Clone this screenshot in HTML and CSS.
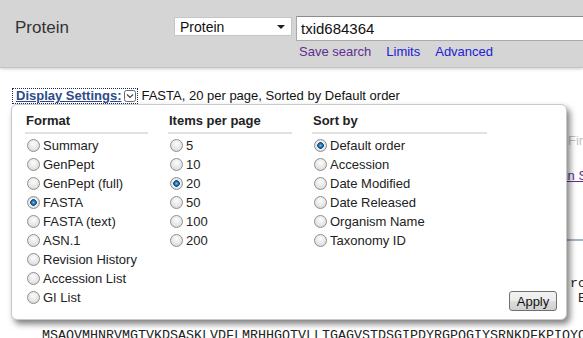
FILE: index.html
```html
<!DOCTYPE html>
<html lang="en">
<head>
    <meta charset="UTF-8">
    <title>Protein - txid684364</title>
    <link rel="stylesheet" href="styles.css">
</head>
<body>

<header class="masthead">
    <div class="db-title">Protein</div>
    <div class="search">
        <div class="search-row">
            <div class="db-select"><span>Protein</span><span class="arrow"></span></div>
            <div class="term-input">txid684364</div>
        </div>
        <div class="search-links">
            <a href="#" class="visited">Save search</a>
            <a href="#">Limits</a>
            <a href="#">Advanced</a>
        </div>
    </div>
</header>

<div class="display-bar">
    <span class="ds-toggle">
        <a href="#" class="ds-link">Display Settings:</a>
        <svg class="ds-icon" width="12" height="12" viewBox="0 0 12 12">
            <rect x="0.5" y="0.5" width="11" height="11" rx="2" fill="#fff" stroke="#6b6b6b"/>
            <path d="M3 4.5 L6 7.5 L9 4.5" fill="none" stroke="#444" stroke-width="1.2"/>
        </svg>
    </span>
    <span class="ds-summary">FASTA, 20 per page, Sorted by Default order</span>
</div>

<div class="side-links">
    <div class="pager">First</div>
    <a href="#" class="visited">Run Sequence</a>
</div>

<div class="rule"></div>

<pre class="fasta">&gt;gi|498475123|ref|WP_010531234.1| NAD-dependent deacetylase [Thio rcobacter sp.]
                                                                   E
<span class="seq">MSAQVMHNRVMGTVKDSASKLVDFLMRHHGQTVLLTGAGVSTDSGIPDYRGPQGIYSRNKDFKPIQYQ</span></pre>

<!-- display settings menu, opened over the results -->
<div class="settings-popup">
    <div class="col col-format">
        <div class="col-head">Format</div>
        <label class="opt"><span class="radio"></span>Summary</label>
        <label class="opt"><span class="radio"></span>GenPept</label>
        <label class="opt"><span class="radio"></span>GenPept (full)</label>
        <label class="opt"><span class="radio on"></span>FASTA</label>
        <label class="opt"><span class="radio"></span>FASTA (text)</label>
        <label class="opt"><span class="radio"></span>ASN.1</label>
        <label class="opt"><span class="radio"></span>Revision History</label>
        <label class="opt"><span class="radio"></span>Accession List</label>
        <label class="opt"><span class="radio"></span>GI List</label>
    </div>
    <div class="col col-items">
        <div class="col-head">Items per page</div>
        <label class="opt"><span class="radio"></span>5</label>
        <label class="opt"><span class="radio"></span>10</label>
        <label class="opt"><span class="radio on"></span>20</label>
        <label class="opt"><span class="radio"></span>50</label>
        <label class="opt"><span class="radio"></span>100</label>
        <label class="opt"><span class="radio"></span>200</label>
    </div>
    <div class="col col-sort">
        <div class="col-head">Sort by</div>
        <label class="opt"><span class="radio on"></span>Default order</label>
        <label class="opt"><span class="radio"></span>Accession</label>
        <label class="opt"><span class="radio"></span>Date Modified</label>
        <label class="opt"><span class="radio"></span>Date Released</label>
        <label class="opt"><span class="radio"></span>Organism Name</label>
        <label class="opt"><span class="radio"></span>Taxonomy ID</label>
    </div>
    <button class="apply-btn">Apply</button>
</div>

</body>
</html>
```

FILE: styles.css
```css
html, body {
    margin: 0;
    padding: 0;
    overflow: hidden;
}

body {
    font-family: "Liberation Sans", Arial, sans-serif;
    font-size: 13px;
    color: #222;
    background: #fff;
}

a {
    color: #2020d8;
    text-decoration: none;
}

a.visited {
    color: #5c2f92;
}

/* top search bar */
.masthead {
    display: flex;
    height: 68px;
    box-sizing: border-box;
    padding: 16px 0 0 15px;
    background: #d5d5d5;
    border-bottom: 1px solid #c4c4c4;
    box-shadow: 0 1px 3px rgba(0, 0, 0, 0.2);
}

.db-title {
    width: 159px;
    flex: none;
    margin-top: 2px;
    font-size: 17px;
    line-height: 20px;
    color: #333;
}

.search-row {
    display: flex;
    align-items: flex-start;
}

.db-select {
    width: 118px;
    height: 19px;
    margin-top: 1px;
    box-sizing: border-box;
    display: flex;
    align-items: center;
    justify-content: space-between;
    padding: 0 6px 0 5px;
    background: #fff;
    border: 1px solid #c6c6c6;
    font-size: 14px;
    color: #111;
}

.arrow {
    border-left: 4px solid transparent;
    border-right: 4px solid transparent;
    border-top: 4px solid #222;
}

.term-input {
    width: 320px;
    height: 25px;
    margin-left: 4px;
    box-sizing: border-box;
    padding-left: 4px;
    background: #fff;
    border: 1px solid #a9a9a9;
    border-top-color: #8c8c8c;
    font-size: 15px;
    line-height: 23px;
    color: #111;
}

.search-links {
    display: flex;
    gap: 15px;
    margin-top: 3px;
    padding-left: 125px;
    line-height: 16px;
}

/* display settings line */
.display-bar {
    display: flex;
    align-items: center;
    margin: 21px 0 0 13px;
    line-height: 14px;
}

.ds-toggle {
    display: inline-flex;
    align-items: center;
    gap: 3px;
    padding: 0 1px 0 3px;
    outline: 1px dotted #1c2c5a;
}

.ds-link {
    color: #2d4b8a;
    font-weight: bold;
    text-decoration: underline;
}

.ds-summary {
    margin-left: 4px;
    color: #111;
}

/* results partly hidden under the menu */
.side-links {
    margin: 30px 0 0 568px;
    line-height: 16px;
    white-space: nowrap;
}

.pager {
    color: #c4c4c4;
    margin-bottom: 19px;
}

.side-links a {
    display: inline-block;
    margin-left: -17px;
    text-decoration: underline;
}

.rule {
    margin: 55px 0 0 42px;
    border-top: 2px solid #a3b5cb;
}

.fasta {
    margin: 35px 0 0 42px;
    font-family: "Liberation Mono", "Courier New", monospace;
    font-size: 13.33px;
    line-height: 15px;
    color: #222;
}

.seq {
    display: block;
    margin-top: 22px;
}

/* settings menu */
.settings-popup {
    position: absolute;
    left: 11px;
    top: 104px;
    width: 556px;
    height: 216px;
    box-sizing: border-box;
    display: flex;
    padding: 8px 9px 8px 13px;
    background: #fff;
    border: 1px solid #c9c9c9;
    border-radius: 6px;
    box-shadow: 3px 4px 6px rgba(0, 0, 0, 0.5);
}

.col {
    display: flex;
    flex-direction: column;
    margin-right: 20px;
}

.col-format { width: 123px; }
.col-items { width: 124px; }
.col-sort { width: 175px; }

.col-head {
    font-weight: bold;
    line-height: 16px;
    padding-left: 1px;
    padding-bottom: 3px;
    border-bottom: 2px solid #e2e2e2;
    margin-bottom: 2px;
}

.opt {
    display: flex;
    align-items: center;
    gap: 3px;
    height: 19px;
    padding-left: 2px;
    white-space: nowrap;
}

.radio {
    width: 13px;
    height: 13px;
    flex: none;
    box-sizing: border-box;
    border-radius: 50%;
    border: 1px solid #8f8f8f;
    background: radial-gradient(circle at 50% 35%, #fdfdfd 0, #e2e2e2 65%, #cdcdcd 100%);
}

.radio.on {
    background: radial-gradient(circle at 50% 50%, #7cc8f2 0, #2a7dbd 1.5px, #0f4a7e 3px, #f4f4f4 3.6px, #e2e2e2 5px, #cdcdcd 100%);
}

.apply-btn {
    margin-left: auto;
    align-self: flex-end;
    width: 48px;
    height: 20px;
    padding: 0;
    border: 1px solid #707070;
    border-radius: 3px;
    background: linear-gradient(#f3f3f3, #ebebeb 50%, #dddddd 50%, #cfcfcf);
    font-family: "Liberation Sans", Arial, sans-serif;
    font-size: 13px;
    color: #111;
}
```
